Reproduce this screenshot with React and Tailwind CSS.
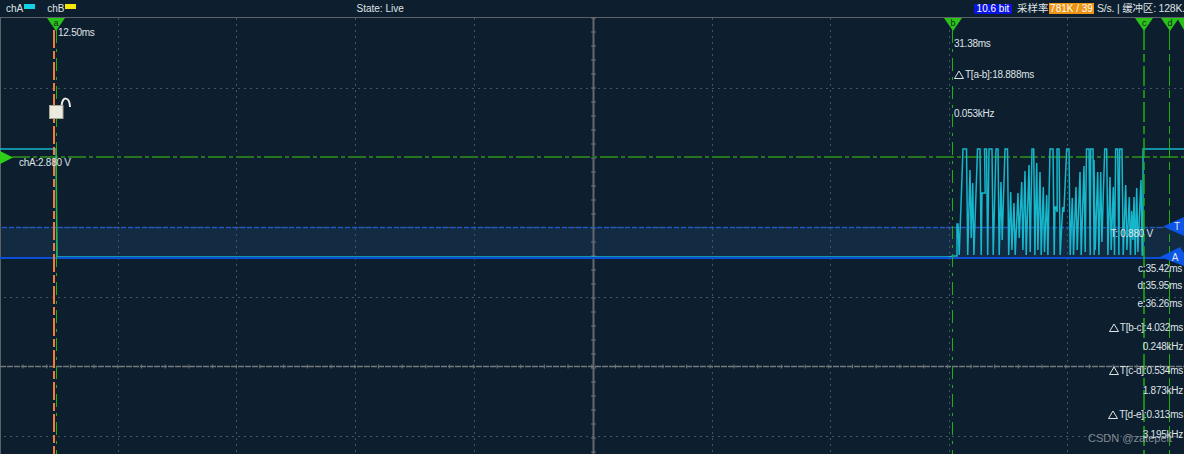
import React from "react";

// burst of the capture: [x, width of the flat top, top y, y it drops to]
const spikes = [
  [958, 0, 224, 255], [963, 3.5, 149, 255], [970, 0, 170, 238], [972.7, 0, 183, 255], [977.5, 2.5, 149, 255],
  [982, 2, 193, 193], [984.5, 2, 149, 255], [989, 3, 149, 255], [996, 2, 149, 255], [1001, 0, 182, 240],
  [1005, 2.5, 149, 255], [1010.7, 0, 192, 250], [1014, 0, 203, 255], [1018, 0, 193, 238], [1021.7, 0, 182, 250],
  [1025, 0, 171, 255], [1029, 0, 165, 252], [1032, 1.7, 149, 255], [1036.7, 0, 163, 250], [1040, 0, 172, 255],
  [1043.3, 0, 187, 252], [1046.7, 0, 195, 255], [1050, 3, 149, 255], [1055, 1, 207, 212], [1057, 2, 149, 255],
  [1062.7, 0, 207, 212], [1066.7, 2.3, 149, 255], [1072.3, 0, 198, 255], [1076, 0, 187, 250], [1080, 0, 172, 255],
  [1084, 0, 166, 252], [1086.5, 2.5, 149, 255], [1090.7, 2.3, 149, 255], [1094, 0, 160, 250], [1097.7, 0, 172, 255],
  [1100.7, 0, 172, 242], [1104.7, 2, 149, 255], [1110, 0, 177, 250], [1113.3, 0, 187, 255], [1115.7, 2, 149, 255],
  [1119.7, 2.3, 149, 255], [1125.7, 0, 185, 250], [1129.3, 0, 197, 255], [1131.7, 0, 211, 240], [1134, 0, 197, 255],
  [1136.7, 0, 188, 252], [1141, 0, 180, 255],
];

const wavePoints = () => {
  const pts = ["0,149", "56,149", "57,257", "948,257", "954,256", "957,256", "957,224"];
  spikes.forEach(([x, w, top, low]) => {
    pts.push(`${x},${top}`);
    if (w) pts.push(`${x + w},${top}`);
    pts.push(`${x + w + 1.2},${low}`);
  });
  pts.push("1143,255", "1143,149", "1184,149");
  return pts.join(" ");
};

const vGrid = [118, 236, 355, 474, 712, 830, 949, 1067];
const hGrid = [88, 227, 297, 436];

const Marker = ({ x, label }) => (
  <g>
    <polygon points={`${x - 9},18 ${x + 9},18 ${x},31`} fill="#2cc21c" />
    <text x={x} y={26} fontSize="9" textAnchor="middle" fill="#0b2a14" fontFamily="Liberation Sans, sans-serif">
      {label}
    </text>
  </g>
);

const ScopeGraph = () => {
  const hTicks = [];
  for (let x = 23; x < 1184; x += 23.7) hTicks.push(x);
  const vTicks = [];
  for (let y = 18; y < 454; y += 14) vTicks.push(y);

  return (
    <svg className="absolute top-[-18px] left-0" width="1184" height="454">
      <rect x="0" y="227" width="1184" height="31" fill="#122b43" />
      <line x1="0.5" y1="18" x2="0.5" y2="454" stroke="#5c6166" />

      {vGrid.map((x) => (
        <line key={x} x1={x + 0.5} y1="18" x2={x + 0.5} y2="454" stroke="#465361" strokeDasharray="2 4" />
      ))}
      {hGrid.map((y) => (
        <line key={y} x1="4" y1={y + 0.5} x2="1184" y2={y + 0.5} stroke="#465361" strokeDasharray="2 4" />
      ))}

      {/* centre axes with their ticks */}
      <line x1="593.5" y1="18" x2="593.5" y2="454" stroke="#63686c" strokeWidth="2" />
      <line x1="0" y1="366.5" x2="1184" y2="366.5" stroke="#75797c" strokeWidth="1.5" strokeDasharray="6 1" />
      {hTicks.map((x) => (
        <line key={x} x1={x} y1="364.5" x2={x} y2="368.5" stroke="#6d7276" />
      ))}
      {vTicks.map((y) => (
        <line key={y} x1="591" y1={y} x2="596" y2={y} stroke="#6d7276" />
      ))}

      <line x1="2" y1="227.5" x2="1164" y2="227.5" stroke="#2058c0" strokeWidth="1.5" strokeDasharray="5 2" />
      <line x1="12" y1="157" x2="1184" y2="157" stroke="#26761e" strokeWidth="2" strokeDasharray="18 3 4 3" />

      <polyline points={wavePoints()} fill="none" stroke="#17b6cb" strokeWidth="1.5" />

      <line x1="0" y1="258" x2="1164" y2="258" stroke="#0c4fd6" strokeWidth="2" />

      {/* cursors */}
      <line x1="54" y1="30" x2="54" y2="454" stroke="#f47b35" strokeWidth="2" strokeDasharray="18 3 8 3" />
      <line x1="56.5" y1="30" x2="56.5" y2="454" stroke="#1fae14" strokeDasharray="13 6 3 6" />
      <line x1="56.5" y1="150" x2="56.5" y2="259" stroke="#2cb81e" />
      <line x1="952.5" y1="30" x2="952.5" y2="454" stroke="#1fae14" strokeDasharray="13 6 3 6" />
      <line x1="1144" y1="30" x2="1144" y2="454" stroke="#1fae14" strokeWidth="1.5" strokeDasharray="20 4 8 4" />
      <line x1="1169.5" y1="30" x2="1169.5" y2="454" stroke="#1fae14" strokeDasharray="20 4 8 4" />

      <Marker x={56} label="a" />
      <Marker x={953} label="b" />
      <Marker x={1144} label="c" />
      <Marker x={1170} label="d" />
      <polygon points="1177,18 1191,18 1184,30" fill="#2cc21c" />

      {/* channel and trigger handles */}
      <polygon points="0,151 13,157.5 0,164" fill="#2fd019" />
      <polygon points="1163,226.5 1184,217 1184,236" fill="#0c55e6" />
      <polygon points="1160,257 1180,247 1184,253 1184,266" fill="#0c55e6" />
      <text x="1177" y="230" fontSize="10" textAnchor="middle" fill="#dfe8f5" fontFamily="Liberation Sans, sans-serif">T</text>
      <text x="1175" y="261" fontSize="10" textAnchor="middle" fill="#dfe8f5" fontFamily="Liberation Sans, sans-serif">A</text>

      {/* lock */}
      <path d="M61.5 106 C62 96 69.5 96 70 107" fill="none" stroke="#ece9de" strokeWidth="2" />
      <rect x="49.5" y="105.5" width="13.5" height="13" fill="#ece9de" stroke="#a9a696" />
    </svg>
  );
};

const Delta = () => (
  <svg className="inline-block mr-px align-[-1px]" width="10" height="9">
    <polygon points="5,1 9.5,8.5 0.5,8.5" fill="none" stroke="#dfe3e6" />
  </svg>
);

export default function App() {
  return (
    <div
      className="w-[1184px] h-[454px] overflow-hidden bg-[#0d1e2e] text-[#dfe3e6]"
      style={{ fontFamily: '"Liberation Sans", "Noto Sans CJK SC", sans-serif' }}
    >
      <header className="flex h-[17px] items-center text-[10px]">
        <span className="ml-[6px]">chA</span>
        <span className="ml-[1px] mb-[4px] w-[11px] h-[5px] bg-[#12d2e6]" />
        <span className="ml-[12px]">chB</span>
        <span className="ml-[1px] mb-[4px] w-[11px] h-[5px] bg-[#f5e60a]" />
        <span className="ml-[280px]">State: Live</span>
        <div className="ml-auto flex items-center whitespace-nowrap">
          <span className="w-[38px] h-[10px] flex items-center justify-center bg-[#0a14e0] text-white">10.6 bit</span>
          <span className="ml-[5px] w-[32px] text-[10.5px]">采样率</span>
          <span className="w-[45px] h-[11px] flex items-center justify-center bg-[#ee9312] text-white">781K / 39</span>
          <span className="ml-[3px] w-[87px] text-[10.5px] tracking-[-0.2px]">S/s. | 缓冲区: 128K.</span>
        </div>
      </header>
      <div className="h-px bg-[#5c6166]" />

      <main className="relative h-[436px] text-[10px] leading-[12px] tracking-[-0.25px] whitespace-nowrap">
        <ScopeGraph />

        <span className="absolute left-[58px] top-[9px]">12.50ms</span>
        <span className="absolute left-[19px] top-[139px]">chA:2.880 V</span>
        <span className="absolute right-[31px] top-[210px]">T: 0.880 V</span>

        {/* cursor b readouts */}
        <div className="absolute left-[954px] top-[20px] flex flex-col">
          <span>31.38ms</span>
          <span className="mt-[19px]"><Delta />T[a-b]:18.888ms</span>
          <span className="mt-[27px]">0.053kHz</span>
        </div>

        {/* cursor summary column */}
        <div className="absolute right-px top-[245px] flex flex-col items-end">
          <span className="pr-px">c:35.42ms</span>
          <span className="pr-px mt-[5px]">d:35.95ms</span>
          <span className="pr-px mt-[6px]">e:36.26ms</span>
          <span className="mt-[12px]"><Delta />T[b-c]:4.032ms</span>
          <span className="mt-[7px]">0.248kHz</span>
          <span className="mt-[12px]"><Delta />T[c-d]:0.534ms</span>
          <span className="mt-[8px]">1.873kHz</span>
          <span className="mt-[12px]"><Delta />T[d-e]:0.313ms</span>
          <span className="mt-[8px]">3.195kHz</span>
        </div>

        <span className="absolute right-[12px] top-[414px] text-[11px] tracking-normal text-[#b9bec2]/70">CSDN @zatepelt</span>
      </main>
    </div>
  );
}
